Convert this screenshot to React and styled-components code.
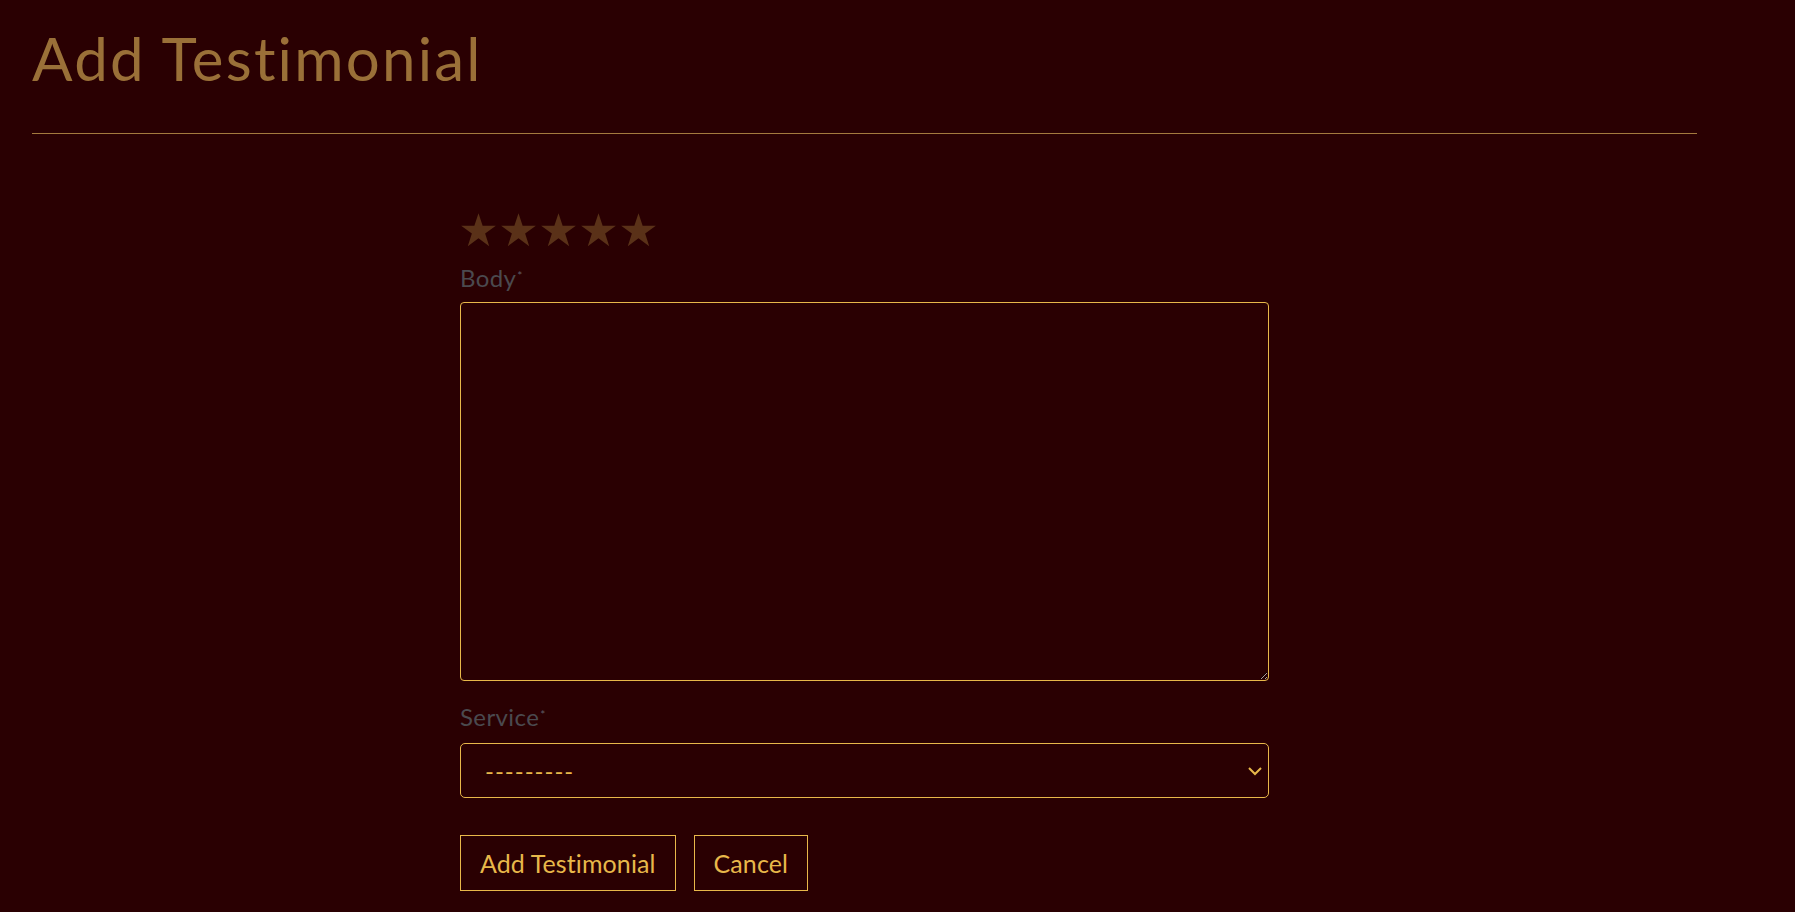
import React from "react";
import styled, { createGlobalStyle } from "styled-components";

const GlobalStyle = createGlobalStyle`
  html, body {
    margin: 0;
    padding: 0;
    background-color: #2a0002;
  }
  body {
    font-family: 'Lato', 'Open Sans', sans-serif;
  }
  * {
    box-sizing: border-box;
  }
`;

const Star = ({ color }) => (
  <svg width="35" height="34" viewBox="0 0 24 23" fill={color}>
    <path d="M12 0 L14.83 8.6 L23.9 8.6 L16.55 13.9 L19.35 22.6 L12 17.2 L4.65 22.6 L7.45 13.9 L0.1 8.6 L9.17 8.6 Z" />
  </svg>
);

const App = () => {
  const [rating, setRating] = React.useState(0);
  const [service, setService] = React.useState("");

  return (
    <>
      <GlobalStyle />
      <Page>
        <Title>Add Testimonial</Title>
        <Divider />
        <Form onSubmit={(e) => e.preventDefault()}>
          <Stars>
            {[1, 2, 3, 4, 5].map((n) => (
              <StarButton key={n} type="button" onClick={() => setRating(n)}>
                <Star color={n <= rating ? "#e8b84a" : "#5a3118"} />
              </StarButton>
            ))}
          </Stars>
          <Label htmlFor="body">
            Body<Req>*</Req>
          </Label>
          <TextArea id="body" />
          <Label htmlFor="service" $spaced>
            Service<Req>*</Req>
          </Label>
          <SelectWrap>
            <Select id="service" value={service} onChange={(e) => setService(e.target.value)}>
              <option value="">---------</option>
            </Select>
            <Chevron width="16" height="10" viewBox="0 0 16 10">
              <path d="M2 2 L8 8 L14 2" fill="none" stroke="#e8b84a" strokeWidth="2" />
            </Chevron>
          </SelectWrap>
          <Buttons>
            <Button type="submit">Add Testimonial</Button>
            <Button type="button">Cancel</Button>
          </Buttons>
        </Form>
      </Page>
    </>
  );
};

const Page = styled.div`
  width: 1795px;
  min-height: 912px;
  padding: 0 98px 0 32px;
`;

const Title = styled.h1`
  margin: 22px 0 0;
  font-family: 'Lato', sans-serif;
  font-weight: 400;
  font-size: 60px;
  line-height: 72px;
  letter-spacing: 2.2px;
  color: #9a7038;
`;

const Divider = styled.hr`
  margin: 39px 0 0;
  border: none;
  border-top: 1px solid #a47a3e;
  height: 0;
`;

const Form = styled.form`
  width: 809px;
  margin: 79px auto 0;
  display: flex;
  flex-direction: column;
`;

const Stars = styled.div`
  display: flex;
  gap: 5px;
  margin-left: 1px;
  height: 34px;
`;

const StarButton = styled.button`
  padding: 0;
  border: none;
  background: none;
  cursor: pointer;
  display: flex;
`;

const Label = styled.label`
  margin-top: ${({ $spaced }) => ($spaced ? "21px" : "16px")};
  font-size: 24px;
  line-height: 29px;
  letter-spacing: 0.4px;
  color: #4b4a4f;
`;

const Req = styled.sup`
  font-size: 12px;
  color: #5e5c62;
  vertical-align: top;
  position: relative;
  top: -2px;
  margin-left: 1px;
`;

const TextArea = styled.textarea`
  margin-top: 10px;
  height: 379px;
  width: 100%;
  background: transparent;
  border: 1px solid #e8b84a;
  border-radius: 4px;
  color: #e8b84a;
  font-family: 'Lato', sans-serif;
  font-size: 20px;
  padding: 12px 24px;
  outline: none;
`;

const SelectWrap = styled.div`
  position: relative;
  margin-top: 12px;
`;

const Select = styled.select`
  appearance: none;
  width: 100%;
  height: 55px;
  background: transparent;
  border: 1px solid #e8b84a;
  border-radius: 5px;
  color: #e8b84a;
  font-family: 'Lato', sans-serif;
  font-size: 24px;
  letter-spacing: 1px;
  padding: 0 24px;
  outline: none;
  option {
    background: #2a0002;
  }
`;

const Chevron = styled.svg`
  position: absolute;
  right: 6px;
  top: 23px;
  pointer-events: none;
`;

const Buttons = styled.div`
  display: flex;
  gap: 18px;
  margin-top: 37px;
`;

const Button = styled.button`
  height: 56px;
  padding: 0 19px;
  background: transparent;
  border: 1px solid #e8b84a;
  border-radius: 0;
  color: #e8b84a;
  font-family: 'Lato', sans-serif;
  font-size: 25px;
  letter-spacing: 0.1px;
  cursor: pointer;
`;

export default App;
